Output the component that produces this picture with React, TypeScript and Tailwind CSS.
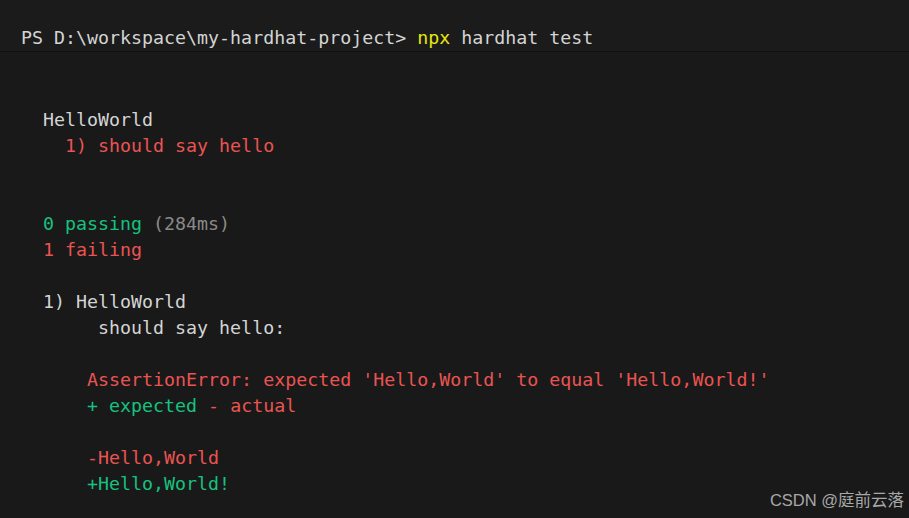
const mono = "font-['DejaVu_Sans_Mono','Liberation_Mono',monospace]";

const Line = ({ children }: { children?: React.ReactNode }) => (
  <div className="h-[26px] leading-[26px] whitespace-pre">{children ?? ' '}</div>
);

const red = 'text-[#e95452]';
const green = 'text-[#16c27f]';

export default function App() {
  return (
    <div
      className={`relative w-[909px] h-[518px] overflow-hidden bg-[#191919] text-[#d4d4d4] text-[18.3px] ${mono}`}
    >
      {/* prompt */}
      <div className="h-[52px] pt-[25px] pl-[21px] border-b border-[#101010] bg-[#1b1b1b]">
        <div className="h-[26px] leading-[26px] whitespace-pre">
          PS D:\workspace\my-hardhat-project&gt;{' '}
          <span className="text-[#e6e610]">npx</span> hardhat test
        </div>
      </div>

      {/* test output */}
      <div className="pl-[21px] pt-[3px]">
        <Line />
        <Line />
        <Line>{'  HelloWorld'}</Line>
        <Line>
          <span className={red}>{'    1) should say hello'}</span>
        </Line>
        <Line />
        <Line />
        <Line>
          <span className={green}>{'  0 passing'}</span>
          <span className="text-[#8a8a8a]"> (284ms)</span>
        </Line>
        <Line>
          <span className={red}>{'  1 failing'}</span>
        </Line>
        <Line />
        <Line>{'  1) HelloWorld'}</Line>
        <Line>{'       should say hello:'}</Line>
        <Line />
        <Line>
          <span className={red}>
            {"      AssertionError: expected 'Hello,World' to equal 'Hello,World!'"}
          </span>
        </Line>
        <Line>
          <span className={green}>{'      + expected'}</span>
          <span className={red}> - actual</span>
        </Line>
        <Line />
        <Line>
          <span className={red}>{'      -Hello,World'}</span>
        </Line>
        <Line>
          <span className={green}>{'      +Hello,World!'}</span>
        </Line>
      </div>

      {/* watermark */}
      <div className="absolute right-[5px] bottom-[8px] text-[16.5px] leading-[20px] text-[#a8a8a8] whitespace-pre font-['Liberation_Sans','Noto_Sans_CJK_SC',sans-serif]">
        CSDN @庭前云落
      </div>
    </div>
  );
}
